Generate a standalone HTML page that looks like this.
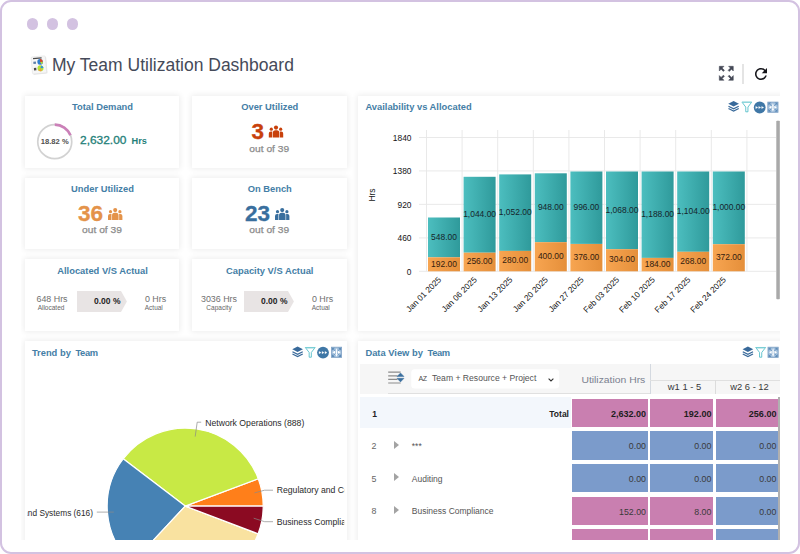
<!DOCTYPE html>
<html lang="en">
<head>
<meta charset="utf-8">
<title>My Team Utilization Dashboard</title>
<style>
*{box-sizing:border-box;margin:0;padding:0}
html,body{width:800px;height:554px;overflow:hidden;background:#fff}
body{font-family:"Liberation Sans",sans-serif;position:relative}
.frame{position:absolute;left:0;top:0;width:800px;height:554px;border:2px solid #d3c2e1;border-radius:11px;background:#fff}
.dot{position:absolute;top:18px;width:11.5px;height:11.5px;border-radius:50%;background:#d3c2e1}
.shot{position:absolute;left:21px;top:44px;width:759px;height:496px;overflow:hidden;background:#fff}
.pg{position:absolute;left:-21px;top:-44px;width:800px;height:554px}
.abs{position:absolute}
.card{position:absolute;background:#fff;box-shadow:0 0 6px 1px rgba(0,0,0,.075)}
.ct{position:absolute;left:0;right:0;top:5.3px;text-align:center;font-weight:bold;font-size:9.35px;color:#447ea6;line-height:12px;white-space:nowrap;padding-left:1px}
.ctl{position:absolute;left:7.4px;top:5.5px;font-weight:bold;font-size:9.35px;color:#447ea6;line-height:12px;white-space:nowrap}
.title{position:absolute;left:52px;top:54px;font-size:17.5px;line-height:22px;color:#454a59;white-space:nowrap}
.big{position:absolute;font-weight:bold;font-size:22.5px;line-height:24px;white-space:nowrap;-webkit-text-stroke:0.3px currentColor}
.outof{position:absolute;left:0;right:0;text-align:center;font-size:9.3px;line-height:11px;color:#8c8c8c;white-space:nowrap;-webkit-text-stroke:0.25px #8c8c8c;transform:scaleX(1.1)}
svg{position:absolute;left:0;top:0;overflow:visible}
.ax{font-family:"Liberation Sans",sans-serif;font-size:8.4px;fill:#151515}
.xl{font-family:"Liberation Sans",sans-serif;font-size:8.3px;fill:#151515}
.bl{font-family:"Liberation Sans",sans-serif;font-size:8.45px;fill:#16262c}
.pl{font-family:"Liberation Sans",sans-serif;font-size:8.66px;fill:#2a2a2a}
.sm{position:absolute;font-size:8.9px;line-height:10px;color:#707070;white-space:nowrap;text-align:center}
.xs{position:absolute;font-size:6.5px;line-height:8px;color:#666;white-space:nowrap;text-align:center}
.pct{position:absolute;font-size:8.5px;font-weight:bold;line-height:10px;color:#1e1e1e;white-space:nowrap}
.rn{position:absolute;font-size:8.9px;line-height:12px;color:#555;white-space:nowrap}
.cell{position:absolute;font-size:8.8px;color:#3a3a3a;white-space:nowrap;text-align:right;padding-right:1.8px}
.tri{position:absolute;width:0;height:0;border-left:5px solid #a3a3a3;border-top:4.5px solid transparent;border-bottom:4.5px solid transparent}
</style>
</head>
<body>
<div class="frame"></div>
<div class="dot" style="left:26.8px"></div>
<div class="dot" style="left:46.8px"></div>
<div class="dot" style="left:66.8px"></div>

<div class="shot"><div class="pg">

<!-- title -->
<svg class="abs" style="left:30px;top:55px" width="18" height="20" viewBox="0 0 18 20">
  <g transform="rotate(-5 9 10)">
    <rect x="2.6" y="2.2" width="14.2" height="17" rx="1" fill="#d9d9d9" opacity="0.7"/>
    <rect x="1.8" y="1.4" width="14.2" height="17" rx="1" fill="#f6f6f6" stroke="#e2e2e2" stroke-width="0.6"/>
    <rect x="3.6" y="2.6" width="8.6" height="1.2" fill="#4a4a4a"/>
    <circle cx="10.4" cy="7" r="2.8" fill="#2f7fd0"/>
    <path d="M10.4 7 L10.4 4.2 A2.8 2.8 0 0 1 13.2 7 Z" fill="#e2451f"/>
    <path d="M10.4 7 L13.2 7 A2.8 2.8 0 0 1 11.6 9.5 Z" fill="#b9d833"/>
    <rect x="3.6" y="6.2" width="2.6" height="2.2" fill="#5b7fa8"/>
    <circle cx="10.2" cy="13.4" r="3" fill="#b4e236"/>
    <path d="M10.2 13.4 L11.2 10.6 A3 3 0 0 1 13.2 13.4 Z" fill="#2f8fe0"/>
    <path d="M10.2 13.4 L8 15.4 A3 3 0 0 0 11.2 16.2 Z" fill="#f59a3a"/>
    <rect x="3.6" y="12.6" width="2.4" height="2.4" fill="#4a4a4a"/>
  </g>
</svg>
<div class="title">My Team Utilization Dashboard</div>

<!-- top right icons -->
<svg class="abs" style="left:716.7px;top:64px" width="18.6" height="18.6" viewBox="0 0 24 24" fill="#444856" stroke="#444856" stroke-width="0.7" stroke-linejoin="round">
  <path d="M15 3l2.3 2.3-2.89 2.87 1.42 1.42L18.7 6.7 21 9V3zM3 9l2.3-2.3 2.87 2.89 1.42-1.42L6.7 5.3 9 3H3zm6 12l-2.3-2.3 2.89-2.87-1.42-1.42L5.3 17.3 3 15v6zm12-6l-2.3 2.3-2.87-2.89-1.42 1.42 2.89 2.87L15 21h6z"/>
</svg>
<div class="abs" style="left:742.2px;top:64.1px;width:1.4px;height:20.3px;background:#e4e4e4"></div>
<svg class="abs" style="left:751.96px;top:64.8px" width="18" height="18" viewBox="0 0 24 24" fill="#15151a">
  <path d="M17.65 6.35C16.2 4.9 14.21 4 12 4c-4.42 0-7.99 3.58-7.99 8s3.57 8 7.99 8c3.73 0 6.84-2.55 7.73-6h-2.08c-.82 2.33-3.04 4-5.65 4-3.31 0-6-2.69-6-6s2.69-6 6-6c1.66 0 3.14.69 4.22 1.78L13 11h7V4l-2.35 2.35z"/>
</svg>

<!-- KPI cards -->
<div class="card" style="left:25px;top:96px;width:154px;height:71.5px">
  <div class="ct">Total Demand</div>
  <svg width="154" height="71" viewBox="0 0 154 71">
    <circle cx="29.75" cy="45.7" r="17" fill="none" stroke="#d2d2d2" stroke-width="1.7"/>
    <path d="M29.75 28.7 A17 17 0 0 1 45.49 39.27" fill="none" stroke="#cb80b8" stroke-width="2.7"/>
  </svg>
  <div class="abs" style="left:13px;top:41px;width:33.5px;text-align:center;font-size:7.6px;line-height:10px;font-weight:bold;color:#505050;white-space:nowrap">18.82 %</div>
  <div class="abs" style="left:55px;top:36px;font-size:11.3px;line-height:16px;color:#1f8079;white-space:nowrap;-webkit-text-stroke:0.3px #1f8079;transform:scaleX(1.055);transform-origin:0 50%">2,632.00</div>
  <div class="abs" style="left:106.5px;top:37px;font-size:9.2px;line-height:16px;color:#1f8079;white-space:nowrap;font-weight:bold">Hrs</div>
</div>

<div class="card" style="left:192px;top:96px;width:154.5px;height:71.5px">
  <div class="ct">Over Utilized</div>
  <div class="big" style="left:59.5px;top:23.8px;color:#c8410b">3</div>
  <svg width="154" height="71"><use href="#ppl" x="76.8" y="29.5" fill="#c8410b"/></svg>
  <div class="outof" style="top:48px">out of 39</div>
</div>

<div class="card" style="left:25px;top:177.6px;width:154px;height:71.2px">
  <div class="ct">Under Utilized</div>
  <div class="big" style="left:53px;top:24.2px;color:#e4934a">36</div>
  <svg width="154" height="70"><use href="#ppl" x="83" y="30" fill="#e4934a"/></svg>
  <div class="outof" style="top:47.4px">out of 39</div>
</div>

<div class="card" style="left:192px;top:177.6px;width:154.5px;height:71.2px">
  <div class="ct">On Bench</div>
  <div class="big" style="left:53px;top:24.2px;color:#396f9e">23</div>
  <svg width="154" height="70"><use href="#ppl" x="83" y="30" fill="#396f9e"/></svg>
  <div class="outof" style="top:47.4px">out of 39</div>
</div>

<div class="card" style="left:25px;top:259px;width:154px;height:71.5px">
  <div class="ct" style="top:5.8px">Allocated V/S Actual</div>
  <div class="sm" style="left:8px;top:34.5px;width:38px">648 Hrs</div>
  <div class="xs" style="left:7px;top:44.8px;width:38px">Allocated</div>
  <svg width="154" height="71"><path d="M52 32.1H96L101.9 42.55L96 53H52Z" fill="#e8e4e4"/></svg>
  <div class="pct" style="left:69px;top:37.3px">0.00 %</div>
  <div class="sm" style="left:112.5px;top:34.5px;width:36px">0 Hrs</div>
  <div class="xs" style="left:110.8px;top:44.8px;width:36px">Actual</div>
</div>

<div class="card" style="left:192px;top:259px;width:154.5px;height:71.5px">
  <div class="ct" style="top:5.8px">Capacity V/S Actual</div>
  <div class="sm" style="left:6px;top:34.5px;width:42px">3036 Hrs</div>
  <div class="xs" style="left:6px;top:44.8px;width:42px">Capacity</div>
  <svg width="154" height="71"><path d="M52 32.1H96L101.9 42.55L96 53H52Z" fill="#e8e4e4"/></svg>
  <div class="pct" style="left:69px;top:37.3px">0.00 %</div>
  <div class="sm" style="left:112.5px;top:34.5px;width:36px">0 Hrs</div>
  <div class="xs" style="left:110.8px;top:44.8px;width:36px">Actual</div>
</div>

<!-- Availability vs Allocated -->
<div class="card" style="left:358px;top:96px;width:430px;height:234.5px">
  <div class="ctl" style="top:4.8px">Availability vs Allocated</div>
</div>
<svg class="abs" width="800" height="554" viewBox="0 0 800 554">
  <defs>
    <linearGradient id="gt" x1="0" x2="1" y1="0" y2="0"><stop offset="0" stop-color="#4cbebf"/><stop offset="1" stop-color="#2f9a9b"/></linearGradient>
    <linearGradient id="go" x1="0" x2="1" y1="0" y2="0"><stop offset="0" stop-color="#f7a551"/><stop offset="1" stop-color="#e58f3a"/></linearGradient>
    <symbol id="ppl" viewBox="0 0 14.4 12" width="14.4" height="12" overflow="visible">
      <circle cx="7.2" cy="2.1" r="2.05"/>
      <path d="M4.05 12V7.3a2.5 2.5 0 0 1 2.5-2.5h1.5a2.5 2.5 0 0 1 2.5 2.5V12Z"/>
      <circle cx="2.5" cy="3.7" r="1.6"/>
      <path d="M0 12V8a2 2 0 0 1 2-2h1.55a3.6 3.6 0 0 0-0.1 1.3V12Z"/>
      <circle cx="11.9" cy="3.7" r="1.6"/>
      <path d="M14.4 12V8a2 2 0 0 0-2-2h-1.35a3.6 3.6 0 0 1 0.1 1.3V12Z"/>
    </symbol>
    <symbol id="ic-layers" viewBox="0 0 12 12" width="11.2" height="11.2" overflow="visible">
      <path d="M6 0.3L11.7 3.2L6 6.1L0.3 3.2Z" fill="#38699a"/>
      <path d="M0.5 5.8L6 8.6L11.5 5.8" fill="none" stroke="#38699a" stroke-width="1.3"/>
      <path d="M0.5 8.3L6 11.1L11.5 8.3" fill="none" stroke="#38699a" stroke-width="1.3"/>
    </symbol>
    <symbol id="ic-filter" viewBox="0 0 12 12" width="10.9" height="11.2" overflow="visible">
      <path d="M0.6 0.7H11.4L7.2 6.2V11.4L4.8 11.4V6.2Z" fill="#fff" stroke="#45b9c4" stroke-width="0.9" stroke-linejoin="round"/>
      <path d="M0.6 0.7H11.4L10.7 1.7H1.3Z" fill="#8fd6dc"/>
    </symbol>
    <symbol id="ic-more" viewBox="0 0 12 12" width="11.8" height="11.8" overflow="visible">
      <circle cx="6" cy="6" r="6" fill="#3f77a6"/>
      <path d="M2 4.9L4 6L2 7.1ZM5 4.9L7 6L5 7.1ZM8 4.9L10 6L8 7.1Z" fill="#fff" stroke="#fff" stroke-width="0.4" stroke-linejoin="round"/>
    </symbol>
    <symbol id="ic-exp" viewBox="0 0 12 12" width="11" height="11.2" overflow="visible">
      <rect x="0.4" y="0.4" width="11.2" height="11.2" fill="#a4c1dd" stroke="#7c9fc4" stroke-width="0.8"/>
      <path d="M1 1H4.2L1 4.2ZM11 1V4.2L7.8 1ZM11 11H7.8L11 7.8ZM1 11V7.8L4.2 11Z" fill="#5f8cb8"/>
      <path d="M2.2 2.2L4.6 4.6M9.8 2.2L7.4 4.6M9.8 9.8L7.4 7.4M2.2 9.8L4.6 7.4" stroke="#5f8cb8" stroke-width="0.9"/>
      <path d="M1.6 6L4.4 4.3V7.7ZM10.4 6L7.6 4.3V7.7ZM6 10.8L4.8 8H7.2ZM6 1.6L5.2 3.8H6.8Z" fill="#fff"/>
      <rect x="5.3" y="3.6" width="1.4" height="5" fill="#fff"/>
    </symbol>
  </defs>
<line x1="426.5" y1="130" x2="426.5" y2="271.3" stroke="#e6e6e6" stroke-width="0.9"/>
<line x1="462.1" y1="130" x2="462.1" y2="271.3" stroke="#e6e6e6" stroke-width="0.9"/>
<line x1="497.7" y1="130" x2="497.7" y2="271.3" stroke="#e6e6e6" stroke-width="0.9"/>
<line x1="533.3" y1="130" x2="533.3" y2="271.3" stroke="#e6e6e6" stroke-width="0.9"/>
<line x1="568.9" y1="130" x2="568.9" y2="271.3" stroke="#e6e6e6" stroke-width="0.9"/>
<line x1="604.5" y1="130" x2="604.5" y2="271.3" stroke="#e6e6e6" stroke-width="0.9"/>
<line x1="640.1" y1="130" x2="640.1" y2="271.3" stroke="#e6e6e6" stroke-width="0.9"/>
<line x1="675.7" y1="130" x2="675.7" y2="271.3" stroke="#e6e6e6" stroke-width="0.9"/>
<line x1="711.3" y1="130" x2="711.3" y2="271.3" stroke="#e6e6e6" stroke-width="0.9"/>
<line x1="746.9" y1="130" x2="746.9" y2="271.3" stroke="#e6e6e6" stroke-width="0.9"/>
<line x1="419" y1="271.3" x2="776" y2="271.3" stroke="#e6e6e6" stroke-width="0.9"/>
<text x="411.5" y="274.5" text-anchor="end" class="ax">0</text>
<line x1="419" y1="237.9" x2="776" y2="237.9" stroke="#e6e6e6" stroke-width="0.9"/>
<text x="411.5" y="241.1" text-anchor="end" class="ax">460</text>
<line x1="419" y1="204.4" x2="776" y2="204.4" stroke="#e6e6e6" stroke-width="0.9"/>
<text x="411.5" y="207.6" text-anchor="end" class="ax">920</text>
<line x1="419" y1="170.9" x2="776" y2="170.9" stroke="#e6e6e6" stroke-width="0.9"/>
<text x="411.5" y="174.1" text-anchor="end" class="ax">1380</text>
<line x1="419" y1="137.5" x2="776" y2="137.5" stroke="#e6e6e6" stroke-width="0.9"/>
<text x="411.5" y="140.7" text-anchor="end" class="ax">1840</text>
<rect x="428" y="217.5" width="32" height="39.8" fill="url(#gt)"/>
<rect x="428" y="257.3" width="32" height="14" fill="url(#go)"/>
<text x="444" y="239.6" text-anchor="middle" class="bl">548.00</text>
<text x="444" y="266.5" text-anchor="middle" class="bl" style="fill:#33200f">192.00</text>
<text transform="translate(441.8,280.3) rotate(-45)" text-anchor="end" class="xl">Jan 01 2025</text>
<rect x="463.6" y="176.8" width="32" height="75.9" fill="url(#gt)"/>
<rect x="463.6" y="252.7" width="32" height="18.6" fill="url(#go)"/>
<text x="479.6" y="216.9" text-anchor="middle" class="bl">1,044.00</text>
<text x="479.6" y="264.2" text-anchor="middle" class="bl" style="fill:#33200f">256.00</text>
<text transform="translate(477.4,280.3) rotate(-45)" text-anchor="end" class="xl">Jan 06 2025</text>
<rect x="499.2" y="174.4" width="32" height="76.5" fill="url(#gt)"/>
<rect x="499.2" y="250.9" width="32" height="20.4" fill="url(#go)"/>
<text x="515.2" y="214.9" text-anchor="middle" class="bl">1,052.00</text>
<text x="515.2" y="263.3" text-anchor="middle" class="bl" style="fill:#33200f">280.00</text>
<text transform="translate(513,280.3) rotate(-45)" text-anchor="end" class="xl">Jan 13 2025</text>
<rect x="534.8" y="173.3" width="32" height="68.9" fill="url(#gt)"/>
<rect x="534.8" y="242.2" width="32" height="29.1" fill="url(#go)"/>
<text x="550.8" y="209.9" text-anchor="middle" class="bl">948.00</text>
<text x="550.8" y="259" text-anchor="middle" class="bl" style="fill:#33200f">400.00</text>
<text transform="translate(548.6,280.3) rotate(-45)" text-anchor="end" class="xl">Jan 20 2025</text>
<rect x="570.4" y="171.5" width="32" height="72.4" fill="url(#gt)"/>
<rect x="570.4" y="244" width="32" height="27.3" fill="url(#go)"/>
<text x="586.4" y="209.9" text-anchor="middle" class="bl">996.00</text>
<text x="586.4" y="259.8" text-anchor="middle" class="bl" style="fill:#33200f">376.00</text>
<text transform="translate(584.2,280.3) rotate(-45)" text-anchor="end" class="xl">Jan 27 2025</text>
<rect x="606" y="171.5" width="32" height="77.7" fill="url(#gt)"/>
<rect x="606" y="249.2" width="32" height="22.1" fill="url(#go)"/>
<text x="622" y="212.6" text-anchor="middle" class="bl">1,068.00</text>
<text x="622" y="262.4" text-anchor="middle" class="bl" style="fill:#33200f">304.00</text>
<text transform="translate(619.8,280.3) rotate(-45)" text-anchor="end" class="xl">Feb 03 2025</text>
<rect x="641.6" y="171.5" width="32" height="86.4" fill="url(#gt)"/>
<rect x="641.6" y="257.9" width="32" height="13.4" fill="url(#go)"/>
<text x="657.6" y="216.9" text-anchor="middle" class="bl">1,188.00</text>
<text x="657.6" y="266.8" text-anchor="middle" class="bl" style="fill:#33200f">184.00</text>
<text transform="translate(655.4,280.3) rotate(-45)" text-anchor="end" class="xl">Feb 10 2025</text>
<rect x="677.2" y="171.5" width="32" height="80.3" fill="url(#gt)"/>
<rect x="677.2" y="251.8" width="32" height="19.5" fill="url(#go)"/>
<text x="693.2" y="213.9" text-anchor="middle" class="bl">1,104.00</text>
<text x="693.2" y="263.8" text-anchor="middle" class="bl" style="fill:#33200f">268.00</text>
<text transform="translate(691,280.3) rotate(-45)" text-anchor="end" class="xl">Feb 17 2025</text>
<rect x="712.8" y="171.5" width="32" height="72.7" fill="url(#gt)"/>
<rect x="712.8" y="244.2" width="32" height="27.1" fill="url(#go)"/>
<text x="728.8" y="210.1" text-anchor="middle" class="bl">1,000.00</text>
<text x="728.8" y="260" text-anchor="middle" class="bl" style="fill:#33200f">372.00</text>
<text transform="translate(726.6,280.3) rotate(-45)" text-anchor="end" class="xl">Feb 24 2025</text>
<text transform="translate(375,195) rotate(-90)" text-anchor="middle" class="ax" style="font-size:8.5px">Hrs</text>
  <rect x="776.3" y="120.8" width="3.5" height="178.5" rx="0.8" fill="#a9a9a9"/>
  <use href="#ic-layers" x="728" y="100.8"/>
  <use href="#ic-filter" x="741.4" y="101.3"/>
  <use href="#ic-more" x="753.8" y="101.6"/>
  <use href="#ic-exp" x="767.4" y="101.6"/>
</svg>

<!-- Trend by Team -->
<div class="card" style="left:25px;top:340.7px;width:321.7px;height:215px">
  <div class="ctl" style="left:6.9px;top:5.9px">Trend by <span style="letter-spacing:-0.35px;margin-left:2px">Team</span></div>
</div>
<svg class="abs" width="800" height="554" viewBox="0 0 800 554" style="clip-path:inset(341px 455.8px 0px 27.5px)">
<path d="M185.2,506.1 L263.2,506.1 A78,78 0 0 0 258.26,478.78 Z" fill="#ff7f1a" stroke="#fff" stroke-width="1.2" stroke-linejoin="round"/>
<path d="M185.2,506.1 L258.26,478.78 A78,78 0 0 0 123.15,458.83 Z" fill="#c8e945" stroke="#fff" stroke-width="1.2" stroke-linejoin="round"/>
<path d="M185.2,506.1 L123.15,458.83 A78,78 0 0 0 132,563.15 Z" fill="#4682b4" stroke="#fff" stroke-width="1.2" stroke-linejoin="round"/>
<path d="M185.2,506.1 L132,563.15 A78,78 0 0 0 258.12,533.8 Z" fill="#f9e2a0" stroke="#fff" stroke-width="1.2" stroke-linejoin="round"/>
<path d="M185.2,506.1 L258.12,533.8 A78,78 0 0 0 263.2,506.1 Z" fill="#8b0a22" stroke="#fff" stroke-width="1.2" stroke-linejoin="round"/>
  <g fill="none" stroke="#8a8a8a" stroke-width="0.7">
    <path d="M195.2 436.6L197.2 422.2H201.2"/>
    <path d="M254.5 492.9L264.6 490.2H273"/>
    <path d="M253.7 518.2L264.6 521.7H273"/>
    <path d="M113.8 512.1H96.8"/>
  </g>
  <text x="205.2" y="426" class="pl">Network Operations (888)</text>
  <text x="276.7" y="493.4" class="pl">Regulatory and Co</text>
  <text x="276.7" y="524.9" class="pl">Business Complian</text>
  <text x="93" y="515.8" text-anchor="end" class="pl" style="font-size:8.32px">and Systems (616)</text>
</svg>
<svg class="abs" width="800" height="554" viewBox="0 0 800 554">
  <use href="#ic-layers" x="292" y="346.3"/>
  <use href="#ic-filter" x="304.8" y="346.7"/>
  <use href="#ic-more" x="317.1" y="346.7"/>
  <use href="#ic-exp" x="331" y="346.7"/>
</svg>

<!-- Data View by Team -->
<div class="card" style="left:358px;top:340.7px;width:430px;height:215px">
  <div class="ctl" style="top:5.9px">Data View by <span style="letter-spacing:-0.35px;margin-left:2px">Team</span></div>
</div>
<div class="abs" style="left:360.4px;top:364px;width:420px;height:29.5px;background:#f6f6f6"></div>
<div class="abs" style="left:388px;top:393px;width:262px;height:1px;background:#e0e0e0"></div>
<div class="abs" style="left:650px;top:364px;width:1px;height:30px;background:#d4d9e0"></div>
<div class="abs" style="left:650px;top:379.5px;width:130px;height:1px;background:#e0e0e0"></div>
<div class="abs" style="left:714.5px;top:379.5px;width:1px;height:14px;background:#dcdcdc"></div>
<svg class="abs" width="800" height="554" viewBox="0 0 800 554">
  <g stroke="#8c8c8c" stroke-width="1.2">
    <path d="M388.2 372.1H400.7M388.2 375.9H397.5M388.2 379.4H397.5M388.2 383H400.7"/>
  </g>
  <path d="M397 376.5L400.5 373L404 376.5Z" fill="#3b6f9e" stroke="#3b6f9e" stroke-width="0.5" stroke-linejoin="round"/>
  <path d="M397 378.3L400.5 381.9L404 378.3Z" fill="#3b6f9e" stroke="#3b6f9e" stroke-width="0.5" stroke-linejoin="round"/>
  <rect x="411.2" y="369.3" width="148" height="19.2" rx="3.5" fill="#fff"/>
  <path d="M548.6 378.6L551 381L553.4 378.6" fill="none" stroke="#333" stroke-width="1.1"/>
  <use href="#ic-layers" x="742.3" y="346.3"/>
  <use href="#ic-filter" x="755.2" y="346.7"/>
  <use href="#ic-exp" x="767.6" y="346.7"/>
</svg>
<div class="abs" style="left:418.5px;top:373.6px;font-size:7px;line-height:10px;color:#4a4a4a;white-space:nowrap;letter-spacing:-0.5px">AZ</div>
<div class="abs" style="left:432px;top:373.2px;font-size:8.62px;line-height:10px;color:#555;white-space:nowrap">Team + Resource + Project</div>
<div class="abs" style="left:560px;top:373.7px;width:85.3px;text-align:right;font-size:9.4px;line-height:12px;color:#7b8190;white-space:nowrap;transform:scaleX(1.105);transform-origin:100% 50%">Utilization Hrs</div>
<div class="abs" style="left:653px;top:381.2px;width:63px;text-align:center;font-size:9.4px;line-height:12px;color:#383838;white-space:nowrap">w1 1 - 5</div>
<div class="abs" style="left:718px;top:381.2px;width:63px;text-align:center;font-size:9.4px;line-height:12px;color:#383838;white-space:nowrap">w2 6 - 12</div>
<div class="abs" style="left:360.4px;top:397px;width:211px;height:31.3px;background:#f3f7fc"></div>
<div class="rn" style="left:372.3px;top:408.3px;font-weight:bold;color:#222;font-size:8.5px">1</div>
<div class="rn" style="left:519px;width:50px;text-align:right;top:408.3px;font-weight:bold;color:#222;font-size:8.5px">Total</div>
<div class="cell" style="left:572.2px;top:398.6px;width:75.6px;height:28.3px;background:#c97fb0;line-height:30.9px;font-weight:bold;color:#1d1d1d;font-size:9px">2,632.00</div>
<div class="cell" style="left:650px;top:398.6px;width:63.2px;height:28.3px;background:#c97fb0;line-height:30.9px;font-weight:bold;color:#1d1d1d;font-size:9px">192.00</div>
<div class="cell" style="left:715.5px;top:398.6px;width:62.7px;height:28.3px;background:#c97fb0;line-height:30.9px;font-weight:bold;color:#1d1d1d;font-size:9px">256.00</div>
<div class="rn" style="left:371.6px;top:439.8px;color:#666">2</div>
<div class="tri" style="left:393.8px;top:440.6px"></div>
<div class="rn" style="left:411.8px;top:439.8px;color:#555;font-size:8.5px">***</div>
<div class="cell" style="left:572.2px;top:431.3px;width:75.6px;height:28.3px;background:#7b9bcb;line-height:30.9px">0.00</div>
<div class="cell" style="left:650px;top:431.3px;width:63.2px;height:28.3px;background:#7b9bcb;line-height:30.9px">0.00</div>
<div class="cell" style="left:715.5px;top:431.3px;width:62.7px;height:28.3px;background:#7b9bcb;line-height:30.9px">0.00</div>
<div class="rn" style="left:371.6px;top:472.5px;color:#666">5</div>
<div class="tri" style="left:393.8px;top:473.3px"></div>
<div class="rn" style="left:411.8px;top:472.5px;color:#555;font-size:8.5px">Auditing</div>
<div class="cell" style="left:572.2px;top:464px;width:75.6px;height:28.3px;background:#7b9bcb;line-height:30.9px">0.00</div>
<div class="cell" style="left:650px;top:464px;width:63.2px;height:28.3px;background:#7b9bcb;line-height:30.9px">0.00</div>
<div class="cell" style="left:715.5px;top:464px;width:62.7px;height:28.3px;background:#7b9bcb;line-height:30.9px">0.00</div>
<div class="rn" style="left:371.6px;top:505.2px;color:#666">8</div>
<div class="tri" style="left:393.8px;top:506.1px"></div>
<div class="rn" style="left:411.8px;top:505.2px;color:#555;font-size:8.5px">Business Compliance</div>
<div class="cell" style="left:572.2px;top:496.7px;width:75.6px;height:28.3px;background:#c97fb0;line-height:30.9px">152.00</div>
<div class="cell" style="left:650px;top:496.7px;width:63.2px;height:28.3px;background:#c97fb0;line-height:30.9px">8.00</div>
<div class="cell" style="left:715.5px;top:496.7px;width:62.7px;height:28.3px;background:#7b9bcb;line-height:30.9px">0.00</div>
<div class="cell" style="left:572.2px;top:529.4px;width:75.6px;height:28.3px;background:#c97fb0;line-height:30.9px"></div>
<div class="cell" style="left:650px;top:529.4px;width:63.2px;height:28.3px;background:#c97fb0;line-height:30.9px"></div>
<div class="cell" style="left:715.5px;top:529.4px;width:62.7px;height:28.3px;background:#7b9bcb;line-height:30.9px"></div>
<div class="abs" style="left:778.2px;top:397px;width:1.5px;height:150px;background:#b0b0b0"></div>

</div></div>
</body>
</html>
